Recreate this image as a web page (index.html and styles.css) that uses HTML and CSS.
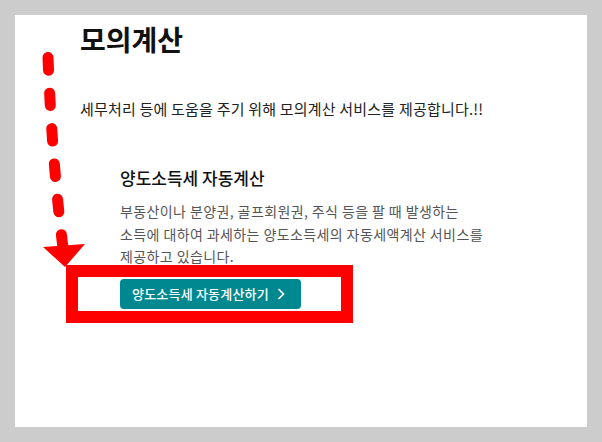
FILE: index.html
```html
<!DOCTYPE html>
<html>
<head>
  <title>모의계산</title>
  <link rel="stylesheet" href="styles.css">
</head>
<body>
  <div class="panel">
    <h1>모의계산</h1>
    <p class="intro">세무처리 등에 도움을 주기 위해 모의계산 서비스를 제공합니다.!!</p>

    <div class="calc">
      <h2>양도소득세 자동계산</h2>
      <p class="desc">부동산이나 분양권, 골프회원권, 주식 등을 팔 때 발생하는 소득에 대하여 과세하는 양도소득세의 자동세액계산 서비스를 제공하고 있습니다.</p>
      <a href="#" class="btn">양도소득세 자동계산하기
        <svg width="8" height="12" viewBox="0 0 8 12"><path d="M1.5 1 L6.5 6 L1.5 11" fill="none" stroke="#fff" stroke-width="1.6"/></svg>
      </a>
    </div>

    <!-- annotation marks drawn over the page -->
    <svg class="arrow" width="100" height="280" viewBox="0 0 100 280">
      <path d="M48 57.5 Q52 160 63 248" fill="none" stroke="#ff0000" stroke-width="11" stroke-linecap="round" stroke-dasharray="12.5 23"/>
      <polygon points="43,247 85,244 65,267" fill="#ff0000"/>
    </svg>
    <div class="highlight"></div>
  </div>
</body>
</html>
```

FILE: styles.css
```css
body {
  margin: 0;
  padding: 15px;
  background-color: #cccccc;
  font-family: "Noto Sans CJK KR", "Noto Sans", sans-serif;
  color: #111;
  word-break: keep-all;
}

.panel {
  position: relative;
  box-sizing: border-box;
  height: 412px;
  padding: 4px 0 0 65px;
  background-color: #fff;
}

h1 {
  margin: 0;
  font-size: 28px;
  font-weight: bold;
  line-height: 40px;
  color: #111;
}

.intro {
  margin: 40px 0 0;
  font-size: 15px;
  line-height: 20px;
  letter-spacing: 0.2px;
  color: #222;
}

.calc {
  margin: 47px 0 0 40px;
  width: 366px;
}

.calc h2 {
  margin: 0;
  font-size: 17px;
  font-weight: 500;
  line-height: 24px;
  color: #111;
}

.desc {
  margin: 10px 0 0;
  font-size: 14px;
  line-height: 22.5px;
  letter-spacing: 0.4px;
  color: #555;
}

.btn {
  display: flex;
  align-items: center;
  gap: 8px;
  width: fit-content;
  margin-top: 11px;
  height: 30px;
  padding: 0 16px 0 12px;
  border-radius: 4px;
  background-color: #008891;
  color: #fff;
  font-size: 13px;
  font-weight: 500;
  letter-spacing: 0.2px;
  text-decoration: none;
}

.arrow {
  position: absolute;
  left: -15px;
  top: -15px;
}

.highlight {
  position: absolute;
  left: 51px;
  top: 250px;
  width: 263px;
  height: 34px;
  border: 12px solid #ff0000;
}
```
